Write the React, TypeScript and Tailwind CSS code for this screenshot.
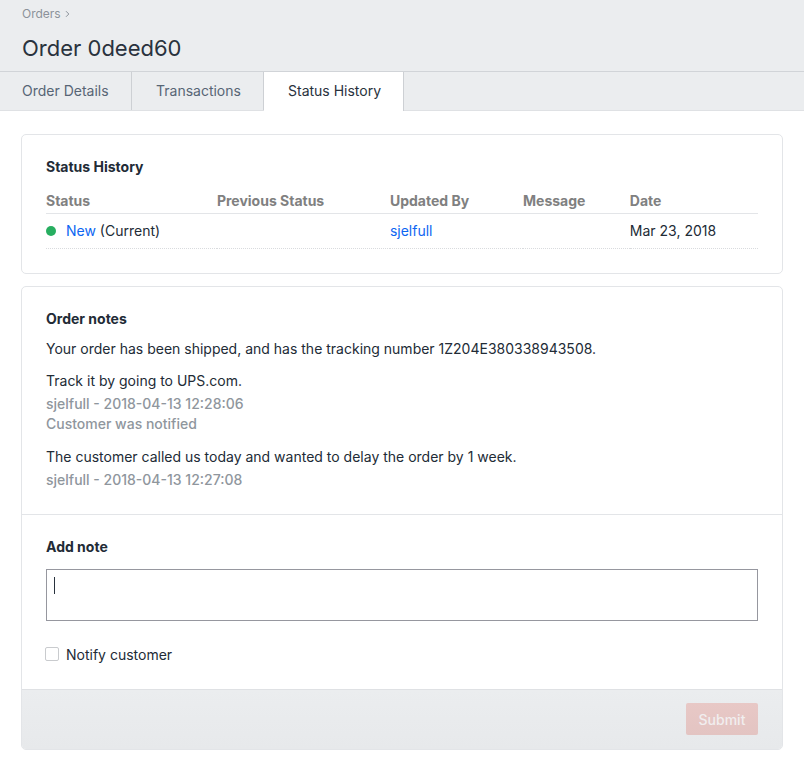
const tabs = [
  { label: "Order Details", width: "w-[132px] pl-[22px]", active: false },
  { label: "Transactions", width: "w-[132px] pl-6", active: false },
  { label: "Status History", width: "w-[140px] pl-6", active: true },
];

const columns = [
  { label: "Status", width: "w-[24%]" },
  { label: "Previous Status", width: "w-[24.3%]" },
  { label: "Updated By", width: "w-[18.7%]" },
  { label: "Message", width: "w-[15%]" },
  { label: "Date", width: "w-[18%]" },
];

const notes = [
  {
    body: [
      "Your order has been shipped, and has the tracking number 1Z204E380338943508.",
      "Track it by going to UPS.com.",
    ],
    meta: "sjelfull - 2018-04-13 12:28:06",
    notified: true,
  },
  {
    body: ["The customer called us today and wanted to delay the order by 1 week."],
    meta: "sjelfull - 2018-04-13 12:27:08",
    notified: false,
  },
];

function Header() {
  return (
    <header className="bg-[#ebedef]">
      <div className="h-[71px] px-[22px] pt-1.5">
        <nav aria-label="Breadcrumb" className="flex h-4 items-center gap-1 text-xs leading-4 text-[#8b929a]">
          <a href="#orders">Orders</a>
          <svg className="h-2 w-1.5" viewBox="0 0 6 8" fill="none" stroke="currentColor" aria-hidden="true">
            <path d="M1 1.2 3.8 4 1 6.8" />
          </svg>
        </nav>
        <h1 className="mt-3 text-[22px] leading-7 font-normal text-[#29323d]">Order 0deed60</h1>
      </div>
      <nav aria-label="Order sections" className="flex h-10 border-y border-t-[#d1d4d8] border-b-[#dfe1e4]">
        {tabs.map((tab) => (
          <a
            key={tab.label}
            href="#tab"
            aria-current={tab.active ? "page" : undefined}
            className={`${tab.width} border-r border-[#cdd0d4] leading-[38px] whitespace-nowrap ${
              tab.active ? "-mb-px bg-white text-[#29323d]" : "text-[#576575]"
            }`}
          >
            {tab.label}
          </a>
        ))}
      </nav>
    </header>
  );
}

function StatusHistory() {
  return (
    <section className="rounded-[5px] border border-[#e3e5e8] p-6">
      <h2 className="mb-4 leading-4 font-bold">Status History</h2>
      <table className="w-full table-fixed border-collapse text-left">
        <thead>
          <tr className="border-b border-[#e3e5e8]">
            {columns.map((column) => (
              <th key={column.label} className={`${column.width} p-0 pb-0.5 font-bold text-[#808080]`}>
                {column.label}
              </th>
            ))}
          </tr>
        </thead>
        <tbody>
          <tr className="border-b border-dotted border-[#d9dbde]">
            <td className="px-0 py-[7px]">
              <span className="mr-2.5 inline-block h-2.5 w-2.5 rounded-full bg-[#27ae60]" />
              <a href="#status" className="text-[#0d66f2]">New</a> (Current)
            </td>
            <td />
            <td className="px-0 py-[7px]">
              <a href="#user" className="text-[#0d66f2]">sjelfull</a>
            </td>
            <td />
            <td className="px-0 py-[7px]">Mar 23, 2018</td>
          </tr>
        </tbody>
      </table>
    </section>
  );
}

function OrderNotes() {
  return (
    <section className="overflow-hidden rounded-[5px] border border-[#e3e5e8]">
      <div className="p-6">
        <h2 className="mb-3 leading-4 font-bold">Order notes</h2>
        <div className="flex flex-col gap-[13px]">
          {notes.map((note) => (
            <article key={note.meta}>
              <div className="mb-[3px] flex flex-col gap-3">
                {note.body.map((line) => (
                  <p key={line}>{line}</p>
                ))}
              </div>
              <p className="font-medium text-[#8f969d]">{note.meta}</p>
              {note.notified && <p className="font-medium text-[#8f969d]">Customer was notified</p>}
            </article>
          ))}
        </div>
      </div>
      <form onSubmit={(event) => event.preventDefault()}>
        <div className="border-t border-[#e3e5e8] p-6">
          <label htmlFor="note" className="mb-3.5 block leading-4 font-bold">
            Add note
          </label>
          <div className="relative mb-6">
            <textarea
              id="note"
              className="block h-[52px] w-full resize-none rounded-none border border-[#96979f] bg-white px-2 py-1.5 outline-none"
            />
            <span className="absolute top-2 left-2 h-[17px] w-px bg-[#29323d]" />
          </div>
          <div className="flex items-start">
            <input
              id="notify"
              type="checkbox"
              className="mt-0.5 -ml-px h-3.5 w-3.5 appearance-none rounded-xs border border-[#c9cbce] bg-white checked:bg-[#0d66f2]"
            />
            <label htmlFor="notify" className="pl-[7px]">
              Notify customer
            </label>
          </div>
        </div>
        <footer className="flex justify-end border-t border-[#dfe1e4] bg-linear-to-b from-[#ebedef] to-[#e7e9eb] px-6 pt-[13px] pb-3.5">
          <button
            type="submit"
            className="h-8 w-[72px] rounded-xs bg-linear-to-b from-[#e8c8c6] to-[#e3c4c2] pt-0.5 font-medium text-[#f1eeef]"
          >
            Submit
          </button>
        </footer>
      </form>
    </section>
  );
}

export default function App() {
  return (
    <div className="min-h-screen bg-white font-[Inter,sans-serif] text-sm leading-5 text-[#222b36]">
      <Header />
      <main className="flex flex-col gap-3 px-[21px] pt-[23px] pb-4">
        <StatusHistory />
        <OrderNotes />
      </main>
    </div>
  );
}
